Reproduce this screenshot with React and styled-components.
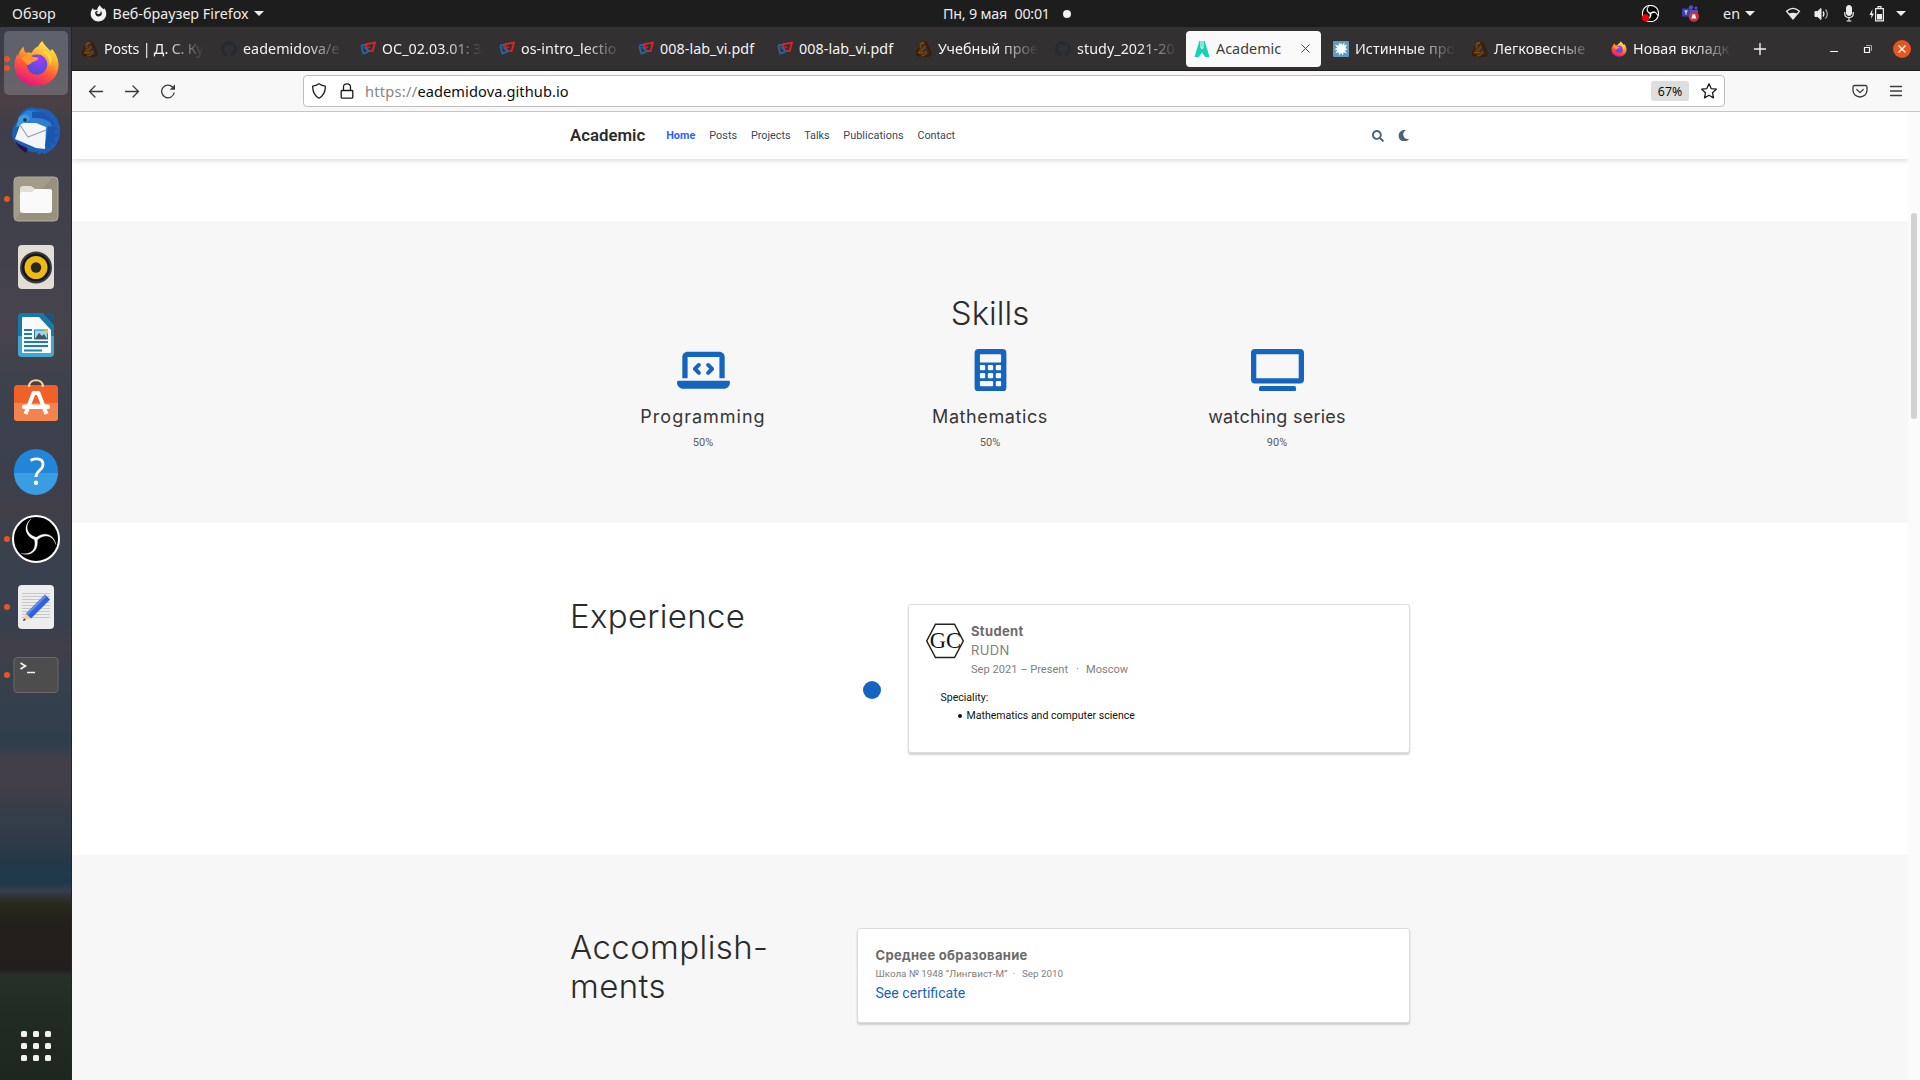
import React from "react";
import styled, { createGlobalStyle, css } from "styled-components";
import { FaSearch, FaMoon, FaGithub } from "react-icons/fa";
import { FaLaptopCode } from "react-icons/fa6";

const ui = "'Noto Sans', 'Open Sans', sans-serif";
const display = "Inter, 'Noto Sans', sans-serif";
const body = "Roboto, 'Noto Sans', sans-serif";

const GlobalStyle = createGlobalStyle`
  * { box-sizing: border-box; }
  body { margin: 0; overflow: hidden; background: #fff; }
  svg { display: block; flex: none; }
  h1, h2, h3, p, ul { margin: 0; padding: 0; font-weight: 400; }
`;

const Desktop = styled.div`
  width: 1920px;
  height: 1080px;
  display: grid;
  grid-template: 27px 1053px / 72px 1848px;
  overflow: hidden;
`;

/* ---------- system bar ---------- */
const SystemBar = styled.header`
  grid-column: 1 / 3;
  display: grid;
  grid-template-columns: 943px 1fr auto;
  align-items: center;
  padding-right: 14px;
  background: #1d1d1d;
  color: #ececec;
  font: 14.3px/27px ${ui};
  white-space: pre;
`;
const BarGroup = styled.div`
  display: flex;
  align-items: center;
  height: 27px;
`;
const BarText = styled.span`
  letter-spacing: ${(p) => p.$spacing || 0}px;
  margin-left: ${(p) => p.$left || 0}px;
`;
const Caret = styled.span`
  margin-left: ${(p) => p.$left}px;
  border: 5px solid transparent;
  border-top-color: #ececec;
  border-bottom: 0;
`;
const NoticeDot = styled.span`
  width: 8px;
  height: 8px;
  margin-left: 13px;
  border-radius: 50%;
  background: #f2f2f2;
`;
const TrayIcon = styled.span`
  margin-left: ${(p) => p.$left}px;
`;

/* ---------- dock ---------- */
const Dock = styled.aside`
  display: flex;
  flex-direction: column;
  padding: 2px 0 18px;
  border-right: 1px solid #22252c;
  background: linear-gradient(
    #3a3e49 0px, #3d3d48 40px, #4a4045 75px, #3d3e49 105px, #40414b 200px, #48434b 300px,
    #3b414d 370px, #3d404b 450px, #413f48 480px, #3a414d 520px, #38404d 600px, #433f48 620px,
    #38404d 650px, #2f3e4c 718px, #433f49 734px, #433f49 758px, #363d49 785px, #2f3b49 815px,
    #223848 838px, #1f394a 856px, #353f4c 864px, #28291f 876px, #231f1c 900px, #211e1d 942px,
    #28302a 948px, #222b24 980px, #1e2620 1053px
  );
`;
const DockItem = styled.div`
  position: relative;
  display: flex;
  align-items: center;
  justify-content: center;
  width: 72px;
  height: 68px;
`;
const DockTile = styled.div`
  display: flex;
  align-items: center;
  justify-content: center;
  width: 64px;
  height: 64px;
  border-radius: 5px;
  background: ${(p) => (p.$active ? "rgba(255,255,255,.19)" : "none")};
`;
const RunMarks = styled.div`
  position: absolute;
  left: 4px;
  top: 0;
  height: 68px;
  display: flex;
  flex-direction: column;
  justify-content: center;
  gap: 3px;
`;
const RunMark = styled.i`
  width: 6px;
  height: 6px;
  border-radius: 50%;
  background: #e95420;
`;
const AppsGrid = styled.div`
  display: grid;
  grid-template-columns: repeat(3, 6px);
  grid-auto-rows: 6px;
  gap: 6px;
  margin: auto 0 1px 21px;
`;
const AppsCell = styled.i`
  border-radius: 1.5px;
  background: #f2f1ee;
`;

/* ---------- browser ---------- */
const Browser = styled.main`
  display: flex;
  flex-direction: column;
  min-width: 0;
`;
const TabStrip = styled.div`
  display: flex;
  align-items: center;
  gap: 4px;
  height: 44px;
  padding: 0 9px 0 2px;
  background: #333031;
  border-bottom: 1px solid #1c1a1b;
`;
const Tab = styled.div`
  display: flex;
  flex: none;
  align-items: center;
  width: 135px;
  height: 36px;
  padding: 0 ${(p) => (p.$active ? 8 : 0)}px 0 8px;
  border-radius: 4px;
  color: ${(p) => (p.$active ? "#3d3d3d" : "#f4f4f4")};
  background: ${(p) => (p.$active ? "#f9f9fa" : "none")};
  font: 14.3px/36px ${ui};
  svg { width: 16px; height: 16px; margin-right: 6px; }
`;
const TabLabel = styled.span`
  flex: 1;
  white-space: nowrap;
  letter-spacing: ${(p) => p.$spacing ?? 0.06}px;
  ${(p) =>
    !p.$full &&
    css`
      mask-image: linear-gradient(to right, #000 62px, transparent 100px);
    `}
`;
const CloseMark = styled.span`
  display: flex;
  svg { width: 15px; height: 15px; margin-right: 0; }
`;
const NewTab = styled.div`
  margin-left: 10px;
`;
const WindowButtons = styled.div`
  display: flex;
  align-items: center;
  gap: 17.5px;
  margin-left: auto;
`;

const Toolbar = styled.div`
  display: grid;
  grid-template-columns: 231px 1422px 1fr;
  align-items: center;
  height: 41px;
  background: #f8f8f8;
  border-bottom: 1px solid #c6c6c6;
`;
const NavButtons = styled.div`
  display: flex;
  gap: 20px;
  padding-left: 16px;
`;
const AddressBar = styled.div`
  display: flex;
  align-items: center;
  height: 32px;
  padding: 0 7px;
  border: 1px solid #bebebe;
  border-radius: 4px;
  background: #fff;
  color: #0c0c0d;
  font: 14.6px/30px ${ui};
`;
const AddressIcon = styled.span`
  margin-right: ${(p) => p.$gap}px;
`;
const Scheme = styled.span`
  color: #858585;
  letter-spacing: 0.26px;
`;
const Host = styled.span`
  letter-spacing: 0.09px;
`;
const ZoomBadge = styled.span`
  width: 38px;
  height: 20px;
  margin: 0 12px 0 auto;
  border-radius: 3px;
  background: #dedede;
  font: 12.3px/21px ${ui};
  text-align: center;
`;
const ToolbarEnd = styled.div`
  display: flex;
  justify-content: flex-end;
  gap: 20px;
  padding-right: 16px;
`;

/* ---------- page ---------- */
const Viewport = styled.div`
  display: grid;
  grid-template-columns: 1836px 12px;
  height: 968px;
`;
const ScrollTrack = styled.div`
  padding: 101px 1px 0 3px;
  background: #fbfbfb;
`;
const ScrollThumb = styled.div`
  width: 6px;
  height: 206px;
  border-radius: 3px;
  background: #d1d1d1;
`;
const Page = styled.div`
  height: 968px;
  overflow: hidden;
  background: #fff;
`;
const SiteNav = styled.nav`
  position: relative;
  display: flex;
  align-items: center;
  height: 47px;
  padding: 0 499px 0 498px;
  background: #fff;
  box-shadow: 0 2px 5px rgba(0, 0, 0, 0.13);
  color: #34495e;
  font: 10.8px/47px ${body};
`;
const Brand = styled.span`
  margin-right: 21px;
  color: #2b2b2b;
  font-size: 16.8px;
  font-weight: 600;
  line-height: 45px;
`;
const NavLink = styled.a`
  margin-right: 13.700px;
  letter-spacing: ${(p) => p.$spacing}px;
  ${(p) =>
    p.$active &&
    css`
      color: #2962ff;
      font-weight: 700;
    `}
`;
const NavTools = styled.div`
  display: flex;
  align-items: center;
  gap: 14px;
  margin-left: auto;
  color: #4c627a;
`;
const Lead = styled.div`
  height: 62px;
`;
const Section = styled.section`
  height: ${(p) => p.$height}px;
  padding: ${(p) => p.$pad}px 498px 0;
  background: ${(p) => (p.$shaded ? "#f7f7f7" : "#fff")};
`;
const Heading = styled.h1`
  color: #2b2b2b;
  font: 340 33px/${(p) => p.$line || 40}px ${display};
  letter-spacing: ${(p) => p.$spacing || 0}px;
  text-align: ${(p) => (p.$center ? "center" : "left")};
`;
const SkillGrid = styled.div`
  display: grid;
  grid-template-columns: repeat(3, 287px);
  justify-content: center;
  margin-top: 16px;
`;
const Skill = styled.div`
  display: flex;
  flex-direction: column;
  align-items: center;
  color: #1565c0;
`;
const SkillIcon = styled.div`
  display: flex;
  height: 42px;
  svg { width: 53px; height: 42.4px; }
`;
const SkillName = styled.h3`
  margin-top: 15px;
  color: #363636;
  font: 380 18px/22px ${display};
  letter-spacing: ${(p) => p.$spacing}px;
`;
const SkillLevel = styled.p`
  margin-top: 6px;
  color: #5c5c5c;
  font: 11px/18px ${body};
`;
const Columns = styled.div`
  display: grid;
  grid-template-columns: ${(p) => p.$columns};
`;
const Marker = styled.div`
  width: 18px;
  height: 18px;
  margin: 85px 0 0 6.5px;
  border-radius: 50%;
  background: #1565c0;
`;
const Card = styled.article`
  height: ${(p) => p.$height}px;
  margin-top: ${(p) => p.$top}px;
  padding: ${(p) => p.$pad};
  border: 1px solid #dcdcdc;
  border-radius: 3px;
  background: #fff;
  box-shadow: 0 2px 2px rgba(0, 0, 0, 0.17);
`;
const CardHead = styled.div`
  display: flex;
  gap: 7.5px;
  svg { margin-top: 1px; }
`;
const CardTitle = styled.h3`
  color: #6b6b6b;
  font: 700 13px/18px ${display};
  letter-spacing: ${(p) => p.$spacing}px;
`;
const CardOrg = styled.p`
  color: #808080;
  font: 380 13px/20px ${display};
  letter-spacing: 0.4px;
`;
const Meta = styled.p`
  display: flex;
  margin-top: 1px;
  color: #808080;
  font: ${(p) => p.$size}px/18px ${body};
`;
const MetaDot = styled.span`
  margin: 0 ${(p) => p.$after}px 0 ${(p) => p.$before}px;
`;
const Summary = styled.div`
  margin: 10px 0 0 15px;
  color: #111;
  font: 10.55px/18px ${body};
`;
const SummaryList = styled.ul`
  padding-left: 17px;
  list-style: none;
`;
const SummaryItem = styled.li`
  display: flex;
  align-items: center;
  gap: 5px;
  &::before {
    content: "";
    width: 4px;
    height: 4px;
    border-radius: 50%;
    background: #111;
  }
`;
const CertLink = styled.a`
  display: block;
  color: #1565c0;
  font: 14.1px/20px ${body};
`;

/* ---------- drawings ---------- */
const Knot = () => (
  <svg viewBox="0 0 16 16" fill="none">
    <path d="M6 1.500q4-1 5 2.500l3 6.500q1.500 4-2.500 4.500L5 14.500Q0 15 1.200 11.500L4.500 4" stroke="#3b1e08" strokeWidth="2.400" />
    <path d="M4.800 7.500Q3 2 7.500 1.800M3 10q4.500-.5 6-5M5 14.500q5 .5 5-4.500" stroke="#73400f" strokeWidth="2" />
    <path d="M5 3.200q1.500-2 3.500-1.600M1.800 11.500q3 1.500 6-.5" stroke="#9a5a1c" strokeWidth="1" />
  </svg>
);
const Hub = () => <FaGithub color="#242b33" />;
const Tuis = () => (
  <svg viewBox="0 0 16 16" fill="none">
    <path d="M1.300 4.500 6.500 3.500M1.300 4.500l2 8 5-1.600" stroke="#28659a" strokeWidth="1.900" />
    <path d="M6 3.200 15 1.600 12.600 10l-5-.2L6 3.200" stroke="#dc2229" strokeWidth="1.900" />
    <path d="m4 6 5.500 4.500" stroke="#28659a" strokeWidth="1.700" />
    <path d="m8.500 5.500 1.500 1.500" stroke="#dc2229" strokeWidth="1.500" />
  </svg>
);
const Hugo = () => (
  <svg viewBox="0 0 16 16">
    <path d="M5.300 0h1.200v6.500L8 8.500l1.500-2V0h1.200L15.500 16h-4.200L8 11.500 4.700 16H.5z" fill="#15d2b4" />
    <path d="M7.500 0h1v6h-1z" fill="#15d2b4" />
  </svg>
);
const Burst = () => (
  <svg viewBox="0 0 16 16">
    <rect width="16" height="16" rx="1" fill="#5f9bbd" />
    <path d="m8 1.500 1 2.500 2.500-2.500-.2 3L14 3.500 12.500 7l2 1.500-2.500.7 1.700 3.300-3.200-1.200L10 14.500l-2-2.700-2 2.700-.4-3.500-3.300 1.500 1.900-3.300L1.500 8.200l2.700-1.400L2 3.500l3.500 1.300L6 1.700l1.400 2z" fill="#fff" />
  </svg>
);
const Fox = ({ size = 16 }) => (
  <svg viewBox="0 0 48 48" width={size} height={size}>
    <defs>
      <linearGradient id="foxBody" x1=".8" y1="0" x2=".35" y2="1">
        <stop offset="0" stopColor="#fff44f" />
        <stop offset=".35" stopColor="#ffb02a" />
        <stop offset=".62" stopColor="#ff5a3a" />
        <stop offset="1" stopColor="#e5127f" />
      </linearGradient>
      <radialGradient id="foxGlobe" cx=".6" cy=".25" r=".8">
        <stop offset="0" stopColor="#9a3fff" />
        <stop offset="1" stopColor="#4c4ccf" />
      </radialGradient>
    </defs>
    <path d="M30 1c1.500 4 5 6.500 8 10 1 .3 1.500-1 1.500-2 4 4 7 10 7 16.500C46.500 38 36.500 47 24.500 47S1.500 38 1.500 26c0-5 1.300-8.500 3-11.500l.8 2C6 12 8 9.500 11 7c0 2.500.5 4.500 2 6 2-.3 4-.3 6 .2C21 9 24 7 26 6c1-2 2.500-4 4-5z" fill="url(#foxBody)" />
    <circle cx="24.500" cy="25" r="10.500" fill="url(#foxGlobe)" />
    <path d="M8 19c4-4 8-4 12-2l6 1c-1 3-4 3.500-6 4.500-2 1.500-3 3-5.500 3C12 22 10 20 8 19z" fill="#ff9a2a" />
    <path d="M30 12c5 3 8 8 7 14 2-2 3-5 2.500-8-2-5-6-8-9.500-6z" fill="#ffd83c" />
  </svg>
);
const FoxMono = () => (
  <svg width="17" height="17" viewBox="0 0 17 17">
    <path d="M9.800.3c1 2 2.400 2.700 3.700 3.900l.8-.9c1.400 1.700 2 3.600 2 5.500 0 4.300-3.500 7.700-7.800 7.700S.7 13.100.7 9c0-2.400.9-4.400 2.300-6l.8 2C5 4.500 6.200 4.500 7 5c.5-2 1.500-3.800 2.800-4.700z" fill="#f2f2f2" />
    <path d="M7.500 6C5 5.800 4.600 8 5.800 10c1.500 2.300 5 1.800 5.900-.8.300-1.500-.2-2.500-1-3.500.1 2-.5 3-1.900 3.200C7 9 6 8.200 6.800 7.300c.8.1 1.300-.4.7-1.300z" fill="#1d1d1d" />
  </svg>
);
const Bird = () => (
  <svg width="48" height="48" viewBox="0 0 48 48">
    <path d="M7 10c1-4 7-10 14-9.700l3 1.200C38 0 48 10 48 24c0 12-7 20-16 23l-2-1.500-3 2.500-1.500-2.500C12 45 1 38 0 27c0-5 2-9 5-12z" fill="#1f5fb8" />
    <path d="M14 4c12-3 26 4 26 20 0 9-5 14-10 18l4-20-18-6-8 2c0-6 2-11 6-14z" fill="#2c7fd2" />
    <path d="M20 5c10-2 20 4 23 14-5-5-13-9-23-8z" fill="#1c56ae" />
    <path d="m4 20 3-10c4-4 10-3 11 2l-7 6z" fill="#3b9be0" />
    <circle cx="13" cy="13" r="1.800" fill="#10294f" />
    <path d="m8 18 3-2h13l10 4-1 22-9-1-21-9z" fill="#f4f5f8" />
    <path d="m8 18 8 12 18-7" fill="none" stroke="#999fa9" strokeWidth="1.100" />
    <path d="M3 34c4 4 9 5 13 8l-2 4C9 43 5 39 3 34z" fill="#27114f" />
    <path d="m36 19 11 2-6 4 6 4-6 2 3 6-6-1 1 6-6-3z" fill="#1a57aa" />
  </svg>
);
const Folder = () => (
  <svg width="48" height="48" viewBox="0 0 48 48">
    <rect x="2" y="2" width="44" height="44" rx="4" fill="#989180" stroke="#b5ae9c" />
    <path d="M3 44V6q0-3 3-3h34z" fill="#a39c8a" />
    <path d="M8 14q0-3 3-3h8l4 3h15q2 0 2 2v5H8z" fill="#e3dfd2" />
    <path d="M8 19q0-2 2-2h10l3-3h14q3 0 3 3v18q0 3-3 3H11q-3 0-3-3z" fill="#fafafa" />
  </svg>
);
const Speaker = () => (
  <svg width="48" height="48" viewBox="0 0 48 48">
    <rect x="6" y="2" width="36" height="44" rx="4" fill="#e2ded5" />
    <circle cx="24" cy="24.500" r="16" fill="#3a3c46" />
    <circle cx="24" cy="24.500" r="14" fill="#16171c" />
    <circle cx="24" cy="24.500" r="11.500" fill="#eeb911" />
    <circle cx="24" cy="24.500" r="5.200" fill="#24272c" />
  </svg>
);
const Writer = () => (
  <svg width="48" height="48" viewBox="0 0 48 48">
    <path d="M10 2h21l11 12v28q0 4-4 4H10q-4 0-4-4V6q0-4 4-4z" fill="#1a78a8" />
    <path d="M6 25h36v17q0 4-4 4H10q-4 0-4-4z" fill="#45a5d1" />
    <path d="M33 2h9v10z" fill="#0c5c87" />
    <path d="M11 6h16l12 13v22q0 1-1 1H11q-1 0-1-1V7q0-1 1-1z" fill="#fafafa" />
    <path d="M12 19h8m-8 4h8m-8 4h8m-8 4h24m-24 4h24m-24 4.500h18" stroke="#1d7fae" strokeWidth="2" />
    <rect x="22.500" y="19" width="13" height="9" fill="#9ed3ec" stroke="#1d7fae" />
    <path d="m23 28 4-6 3 3 2-2 3 5z" fill="#3f5560" />
    <path d="M32 19h4v4z" fill="#f4c222" />
  </svg>
);
const Store = () => (
  <svg width="48" height="48" viewBox="0 0 48 48">
    <rect x="2" y="6" width="44" height="36" rx="3.500" fill="#f0612a" />
    <path d="M2 24h44v14.500q0 3.500-3.500 3.500h-37Q2 42 2 38.500z" fill="#f3834f" />
    <path d="M17 8c0-9 14-9 14 0" fill="none" stroke="#f1cf9f" strokeWidth="2.200" />
    <path d="m22 13-8.500 22M26 13l8.500 22" stroke="#fff" strokeWidth="4" />
    <path d="M21 12h6v4h-6z" fill="#fff" />
    <rect x="10" y="25.500" width="28" height="4.500" rx="2" fill="#fff" />
  </svg>
);
const Help = () => (
  <svg width="48" height="48" viewBox="0 0 48 48">
    <circle cx="24" cy="24" r="22" fill="#2285d8" />
    <path d="M2 26a22 22 0 0 0 44 0z" fill="#3a9de3" />
    <path d="M18.500 13.500c3-2 12.500-3.500 12.500 4 0 6-7 5.500-7 12.500" fill="none" stroke="#fff" strokeWidth="2.800" />
    <circle cx="24" cy="35.700" r="2.200" fill="#fff" />
  </svg>
);
const Obs = ({ size = 48, live }) => (
  <svg width={size} height={size} viewBox="0 0 48 48">
    <circle cx="24" cy="24" r="23" fill="#000" stroke="#fff" strokeWidth={live ? 3 : 2} />
    {[0, 120, 240].map((turn) => (
      <path
        key={turn}
        transform={`rotate(${turn} 24 24)`}
        d="M23.500 25C12.500 21 11 10.500 19 4c-6.500 6.500-5 15.500 5.500 18.500z"
        fill="#fff"
        stroke="#fff"
        strokeWidth={live ? 2 : 0.3}
      />
    ))}
    {live && <circle cx="10" cy="36" r="10" fill="#f50000" />}
  </svg>
);
const Editor = () => (
  <svg width="48" height="48" viewBox="0 0 48 48">
    <rect x="6" y="2" width="36" height="44" rx="4" fill="#ededed" />
    <path d="M10 10.500h28m-28 3h28m-28 3h28m-28 3h28m-28 3h28m-28 3h28m-28 3h28m-28 3h28m-28 3h28" stroke="#c7c7c7" />
    <path d="m11 38 3-7.500 4.500 4.500z" fill="#f5cd9e" />
    <path d="m14 30.500 19-19 5 5-19 19z" fill="#2e63dc" />
    <path d="m14 30.500 19-19 1.700 1.700-19 19z" fill="#5f8af0" />
    <path d="m11 38 1-2.800 1.800 1.800z" fill="#333" />
  </svg>
);
const Term = () => (
  <svg width="48" height="48" viewBox="0 0 48 48">
    <rect x="2" y="6.500" width="44" height="35" rx="3" fill="#4d4d4d" stroke="#696969" />
    <path d="m8.500 12 5 3-5 3M15 21.500h8" fill="none" stroke="#f2f2f2" strokeWidth="1.700" />
  </svg>
);
const Teams = () => (
  <svg width="17" height="17" viewBox="0 0 17 17">
    <circle cx="9" cy="2.500" r="2.200" fill="#4b53bc" />
    <circle cx="14" cy="3" r="1.600" fill="#4b53bc" />
    <path d="M6 5h10v5H6z" fill="#4b53bc" />
    <rect y="3.500" width="8" height="8" fill="#3940ab" />
    <path d="M2.500 6h3M4 6v3.500" stroke="#fff" strokeWidth="1" />
    <circle cx="11.800" cy="11.500" r="5.200" fill="#c4314b" />
    <path d="M9.300 13.500c.8-1 .3-4.500 2.500-4.500s1.700 3.500 2.500 4.500z" fill="#fff" />
  </svg>
);
const Wifi = () => (
  <svg width="16" height="14" viewBox="0 0 16 14">
    <path d="M1.500 4.200Q8-1.400 14.500 4.200L8 12z" fill="none" stroke="#ececec" strokeWidth="1.200" />
    <path d="M3.800 6.600q4.200-1.800 8.400 0L8 12z" fill="#ececec" />
  </svg>
);
const Volume = () => (
  <svg width="16" height="14" viewBox="0 0 16 14" fill="none" stroke="#ececec">
    <path d="M1 4.500h2.500L7 1.500v11L3.500 9.500H1z" fill="#ececec" />
    <path d="M9 4.500q1.800 2.500 0 5" strokeWidth="1.300" />
    <path d="M11.500 2.500q3.800 4.500 0 9" stroke="#aaa" strokeWidth="1.200" />
  </svg>
);
const Mic = () => (
  <svg width="10" height="17" viewBox="0 0 10 17" fill="none" stroke="#ececec">
    <rect x="2.500" y=".5" width="5" height="10" rx="2.500" fill="#ececec" />
    <path d="M.8 7v2q0 3.500 4.200 3.500T9.200 9V7M5 12.500V16M2.500 16h5" strokeWidth="1.200" />
  </svg>
);
const Battery = () => (
  <svg width="16" height="16" viewBox="0 0 16 16">
    <path d="M3.500 3 .5 9h2l-.6 4L5 7.500H3z" fill="#ececec" />
    <path d="M6.600 2.600h7.800v12.200H6.600zM9 2.500V.7h3v1.800" fill="none" stroke="#ececec" strokeWidth="1.200" />
    <path d="M8 8h5v5.500H8z" fill="#ececec" />
  </svg>
);
const Line = ({ d, size = 16, color = "#3b3b3e", width = 1.3, children }) => (
  <svg width={size} height={size} viewBox="0 0 16 16" fill="none" stroke={color} strokeWidth={width} strokeLinecap="round" strokeLinejoin="round">
    <path d={d} />
    {children}
  </svg>
);
const Reload = () => (
  <svg width="16" height="16" viewBox="0 0 16 16" fill="none" stroke="#3b3b3e" strokeWidth="1.300">
    <path d="M14.200 9.500a6.300 6.300 0 1 1-1.600-5.300l1 1" />
    <path d="M15 1.500v5.300H9.700z" fill="#3b3b3e" stroke="none" />
  </svg>
);
const CloseWindow = () => (
  <svg width="18" height="18" viewBox="0 0 18 18">
    <circle cx="9" cy="9" r="9" fill="#e95420" />
    <path d="m5.500 5.500 7 7m0-7-7 7" stroke="#fff" strokeWidth="1.400" />
  </svg>
);
const Monitor = () => (
  <svg viewBox="0 0 640 512" fill="currentColor">
    <path fillRule="evenodd" d="M48 0h544a48 48 0 0 1 48 48v320a48 48 0 0 1-48 48H48a48 48 0 0 1-48-48V48A48 48 0 0 1 48 0zm16 64v288h512V64z" />
    <rect x="96" y="448" width="448" height="64" rx="24" />
  </svg>
);
const Calculator = () => (
  <svg viewBox="0 0 384 512">
    <rect width="384" height="512" rx="48" fill="currentColor" />
    <g fill="#f7f7f7">
      <rect x="64" y="64" width="256" height="98" rx="12" />
      {[194, 290].map((y) =>
        [64, 160, 256].map((x) => <rect key={`${x}-${y}`} x={x} y={y} width="64" height="64" rx="12" />)
      )}
      <rect x="64" y="386" width="160" height="64" rx="12" />
      <rect x="256" y="386" width="64" height="64" rx="12" />
    </g>
  </svg>
);
const Hexagon = () => (
  <svg width="38" height="36" viewBox="0 0 38 36">
    <path d="M9.500 1.200h19L37.300 18l-8.800 16.500h-19L.7 18z" fill="none" stroke="#222" strokeWidth="1.500" />
    <text x="19.500" y="25" textAnchor="middle" fontFamily="'Liberation Serif', serif" fontSize="22.500" fill="#111">GC</text>
  </svg>
);

const dockApps = [
  { icon: <Fox size={47} />, marks: 2, active: true },
  { icon: <Bird />, marks: 0 },
  { icon: <Folder />, marks: 1 },
  { icon: <Speaker />, marks: 0 },
  { icon: <Writer />, marks: 0 },
  { icon: <Store />, marks: 0 },
  { icon: <Help />, marks: 0 },
  { icon: <Obs />, marks: 1 },
  { icon: <Editor />, marks: 1 },
  { icon: <Term />, marks: 1 },
];
const tabs = [
  { icon: <Knot />, label: "Posts | Д. С. Ку", spacing: -0.2 },
  { icon: <Hub />, label: "eademidova/e" },
  { icon: <Tuis />, label: "ОС_02.03.01: З" },
  { icon: <Tuis />, label: "os-intro_lectio" },
  { icon: <Tuis />, label: "008-lab_vi.pdf", full: true },
  { icon: <Tuis />, label: "008-lab_vi.pdf", full: true },
  { icon: <Knot />, label: "Учебный прое" },
  { icon: <Hub />, label: "study_2021-20" },
  { icon: <Hugo />, label: "Academic", active: true, full: true },
  { icon: <Burst />, label: "Истинные про" },
  { icon: <Knot />, label: "Легковесные" },
  { icon: <Fox />, label: "Новая вкладк" },
];
const links = [
  ["Home", 0.1, true],
  ["Posts", 0.1],
  ["Projects", 0],
  ["Talks", 0],
  ["Publications", 0.08],
  ["Contact", 0],
];
const skills = [
  { icon: <FaLaptopCode />, name: "Programming", level: "50%", spacing: 1 },
  { icon: <Calculator />, name: "Mathematics", level: "50%", spacing: 0.6 },
  { icon: <Monitor />, name: "watching series", level: "90%", spacing: 0.25 },
];

export default function App() {
  return (
    <Desktop>
      <GlobalStyle />
      <SystemBar>
        <BarGroup>
          <BarText $left={12}>Обзор</BarText>
          <TrayIcon $left={34}><FoxMono /></TrayIcon>
          <BarText $left={6} $spacing={0.03}>Веб-браузер Firefox</BarText>
          <Caret $left={5} />
        </BarGroup>
        <BarGroup>
          <BarText $spacing={-0.2}>Пн, 9 мая</BarText>
          <BarText $left={7.5} $spacing={-0.3}>00:01</BarText>
          <NoticeDot />
        </BarGroup>
        <BarGroup>
          <Obs size={17} live />
          <TrayIcon $left={23}><Teams /></TrayIcon>
          <BarText $left={24}>en</BarText>
          <Caret $left={5} />
          <TrayIcon $left={30}><Wifi /></TrayIcon>
          <TrayIcon $left={13}><Volume /></TrayIcon>
          <TrayIcon $left={14}><Mic /></TrayIcon>
          <TrayIcon $left={15}><Battery /></TrayIcon>
          <Caret $left={11} />
        </BarGroup>
      </SystemBar>

      <Dock>
        {dockApps.map((app, i) => (
          <DockItem key={i}>
            <DockTile $active={app.active}>{app.icon}</DockTile>
            <RunMarks>
              {Array.from({ length: app.marks }, (_, n) => <RunMark key={n} />)}
            </RunMarks>
          </DockItem>
        ))}
        <AppsGrid>
          {Array.from({ length: 9 }, (_, n) => <AppsCell key={n} />)}
        </AppsGrid>
      </Dock>

      <Browser>
        <TabStrip>
          {tabs.map((tab, i) => (
            <Tab key={i} $active={tab.active}>
              {tab.icon}
              <TabLabel $full={tab.full} $spacing={tab.spacing}>{tab.label}</TabLabel>
              {tab.active && <CloseMark><Line d="m4 4 8 8m0-8-8 8" width={1} /></CloseMark>}
            </Tab>
          ))}
          <NewTab><Line d="M8 2.500v11M2.500 8h11" color="#f4f4f4" width={1.400} /></NewTab>
          <WindowButtons>
            <Line d="M4.500 10.500h7" color="#fff" width={1.200} />
            <Line d="M4.500 6.500h5v5h-5z" color="#fff" width={1.200}>
              <path d="M6.500 4.500h5v5" stroke="#aaa" strokeWidth="1" />
            </Line>
            <CloseWindow />
          </WindowButtons>
        </TabStrip>

        <Toolbar>
          <NavButtons>
            <Line d="M14.500 8.500h-13m5.500-5.500-5.500 5.500L7 14" />
            <Line d="M1.500 8.500h13M9 3l5.500 5.500L9 14" />
            <Reload />
          </NavButtons>
          <AddressBar>
            <AddressIcon $gap={12}>
              <Line color="#1c1c1e" d="M8 .8q3 2.200 6.300 2.400.3 8-6.300 12Q1.400 11.200 1.700 3.200 5 3 8 .8z" />
            </AddressIcon>
            <AddressIcon $gap={10}>
              <Line color="#1c1c1e" d="M3 7.500h10q.8 0 .8.800v6q0 .8-.8.800H3q-.8 0-.8-.8v-6q0-.8.800-.8zM4.500 7.500V4.200Q4.500.8 8 .8t3.500 3.400v3.300" />
            </AddressIcon>
            <Scheme>https://</Scheme>
            <Host>eademidova.github.io</Host>
            <ZoomBadge>67%</ZoomBadge>
            <Line color="#1c1c1e" d="m8 .8 2.200 4.800 5.100.6-3.800 3.500 1 5.200L8 12.300l-4.500 2.600 1-5.200L.7 6.200l5.100-.6z" />
          </AddressBar>
          <ToolbarEnd>
            <Line d="M2.500 2.500h11q1.500 0 1.500 1.500v3.500a7 6.500 0 0 1-14 0V4q0-1.500 1.500-1.500zM4.800 6.500 8 9.600l3.200-3.100" />
            <Line d="M2.500 3.500h11m-11 4.500h11m-11 4.500h11" />
          </ToolbarEnd>
        </Toolbar>

        <Viewport>
          <Page>
            <SiteNav>
              <Brand>Academic</Brand>
              {links.map(([label, spacing, active]) => (
                <NavLink key={label} $spacing={spacing} $active={active}>{label}</NavLink>
              ))}
              <NavTools>
                <FaSearch size={12} />
                <FaMoon size={11.5} />
              </NavTools>
            </SiteNav>
            <Lead />

            <Section $height={302} $pad={72} $shaded>
              <Heading $center>Skills</Heading>
              <SkillGrid>
                {skills.map((s) => (
                  <Skill key={s.name}>
                    <SkillIcon>{s.icon}</SkillIcon>
                    <SkillName $spacing={s.spacing}>{s.name}</SkillName>
                    <SkillLevel>{s.level}</SkillLevel>
                  </Skill>
                ))}
              </SkillGrid>
            </Section>

            <Section $height={332} $pad={73}>
              <Columns $columns="286.500px 51px 502.500px">
                <Heading $spacing={0.3}>Experience</Heading>
                <Marker />
                <Card $height={149} $top={8} $pad="17px 17px 0">
                  <CardHead>
                    <Hexagon />
                    <div>
                      <CardTitle $spacing={0.35}>Student</CardTitle>
                      <CardOrg>RUDN</CardOrg>
                      <Meta $size={11.1}>
                        Sep 2021 – Present<MetaDot $before={8} $after={7}>·</MetaDot>Moscow
                      </Meta>
                    </div>
                  </CardHead>
                  <Summary>
                    <p>Speciality:</p>
                    <SummaryList>
                      <SummaryItem>Mathematics and computer science</SummaryItem>
                    </SummaryList>
                  </Summary>
                </Card>
              </Columns>
            </Section>

            <Section $height={225} $pad={73} $shaded>
              <Columns $columns="286.500px 553.500px">
                <Heading $line={39} $spacing={0.4}>Accomplish-<br />ments</Heading>
                <Card $height={95} $top={0} $pad="17px 18px 0">
                  <CardTitle $spacing={0.3}>Среднее образование</CardTitle>
                  <Meta $size={9.8}>
                    Школа № 1948 “Лингвист-М”<MetaDot $before={5} $after={7}>·</MetaDot>Sep 2010
                  </Meta>
                  <CertLink>See certificate</CertLink>
                </Card>
              </Columns>
            </Section>
          </Page>
          <ScrollTrack><ScrollThumb /></ScrollTrack>
        </Viewport>
      </Browser>
    </Desktop>
  );
}
